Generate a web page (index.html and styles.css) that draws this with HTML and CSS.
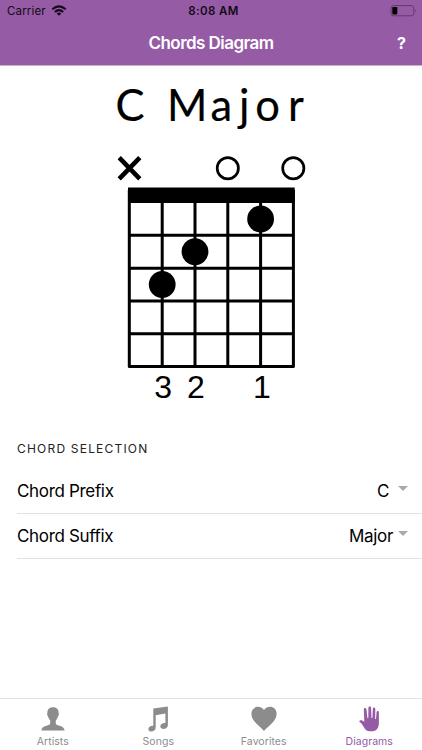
FILE: index.html
```html
<!DOCTYPE html>
<html lang="en">

<head>
  <meta charset="UTF-8">
  <meta name="viewport" content="width=device-width, initial-scale=1.0">
  <title>Chords Diagram</title>
  <link rel="stylesheet" href="styles.css">
</head>

<body>
  <div class="app">
    <header class="header">
      <div class="status">
        <div class="carrier">
          <span>Carrier</span>
          <svg width="16" height="12" viewBox="0 0 16 12" fill="none" stroke="#120a18" stroke-width="2">
            <path d="M1.3 4.3Q8 -1.5 14.7 4.3M3.8 7Q8 3.2 12.2 7" />
            <path d="M5.7 8.4Q8 6.4 10.3 8.4L8 10.8Z" fill="#120a18" stroke="none" />
          </svg>
        </div>
        <span class="time">8:08 AM</span>
        <svg class="battery" width="27" height="12" viewBox="0 0 27 12">
          <rect x="1" y=".6" width="22.8" height="10.2" rx="2.4" fill="none" stroke="#623c6c" />
          <rect x="2.3" y="2" width="5" height="7.4" rx=".8" />
          <path d="M25 4Q26.6 5.7 25 7.4Z" fill="#623c6c" />
        </svg>
      </div>
      <div class="toolbar">
        <h1>Chords Diagram</h1>
        <button class="help">?</button>
      </div>
    </header>

    <main class="content">
      <svg class="chord" width="212" height="345" viewBox="105 66 212 345">
        <text class="chord-name" x="115.5 145 167 210.5 239 255.3 288" y="120.5">C Major</text>
        <g fill="none" stroke="#000">
          <path d="M119.2 157.7L139.8 178.8M139.8 157.7L119.2 178.8" stroke-width="4.6" />
          <circle cx="227.8" cy="168.2" r="10.6" stroke-width="2.7" />
          <circle cx="293.3" cy="168.2" r="10.6" stroke-width="2.7" />
          <path d="M129.3 190V366.6H293.4V190M162.2 190V366.6M195 190V366.6M227.8 190V366.6M260.6 190V366.6" stroke-width="3" stroke-linejoin="round" />
          <path d="M129.3 235.3H293.4M129.3 268.2H293.4M129.3 301H293.4M129.3 333.8H293.4" stroke-width="3" />
        </g>
        <rect x="128" y="187.5" width="166.7" height="15.5" />
        <circle cx="260.6" cy="219" r="13.4" />
        <circle cx="195" cy="251.7" r="13.4" />
        <circle cx="162.2" cy="284.5" r="13.4" />
        <g class="fingers">
          <text x="163.2" y="398">3</text>
          <text x="196" y="398">2</text>
          <text x="261.8" y="398">1</text>
        </g>
      </svg>

      <h2>CHORD SELECTION</h2>
      <div class="row">
        <label>Chord Prefix</label>
        <span class="value prefix">C</span>
        <span class="arrow"></span>
      </div>
      <div class="row">
        <label>Chord Suffix</label>
        <span class="value">Major</span>
        <span class="arrow"></span>
      </div>
    </main>

    <nav class="tabs">
      <a class="tab">
        <svg width="30" height="28" viewBox="0 0 30 28">
          <path d="M15 2.2C18.8 2.2 20.8 4.5 20.6 8C21.2 8.6 20.8 10.8 19.9 11.4C19.5 13.3 18.6 14.4 17.8 15.3V18.7C18.3 20.8 26.2 20.1 26.6 25.6H3.4C3.8 20.1 11.7 20.8 12.2 18.7V15.3C11.4 14.4 10.5 13.3 10.1 11.4C9.2 10.8 8.8 8.6 9.4 8C9.2 4.5 11.2 2.2 15 2.2Z" />
        </svg>
        <span>Artists</span>
      </a>
      <a class="tab">
        <svg width="30" height="28" viewBox="0 0 30 28">
          <path d="M10.3 3.6L24.9 1.5V20.3C24.9 24.5 17.6 25.4 17.3 21.6C17.2 18.8 20.3 17.5 22.4 18V8.6L12.7 10.2V22.6C12.7 27.1 5.6 28 5.4 24.3C5.3 21.6 8.3 20.2 10.3 20.8Z" />
        </svg>
        <span>Songs</span>
      </a>
      <a class="tab">
        <svg width="30" height="28" viewBox="0 0 30 28">
          <path d="M15 5.1C19-.6 27.8 1.5 27.6 9.2C27.4 16.2 19.5 20.7 15 26C10.5 20.7 2.6 16.2 2.4 9.2C2.2 1.5 11-.6 15 5.1Z" />
        </svg>
        <span>Favorites</span>
      </a>
      <a class="tab active">
        <svg width="30" height="28" viewBox="0 0 30 28">
          <path d="M9.8 4.5C9.8 2.5 12.3 2.5 12.5 4.5L13.4 13H14.3L14.4 2.9C14.4 1 17 1 17.1 2.9L17.5 13H18.4L18.8 4C18.9 2 21.3 2.2 21.3 4.1L21.2 14H22L22.6 7.3C22.8 5.4 24.9 5.7 24.9 7.5V17.5C24.9 22.5 22.8 26.2 18.5 26.2H16C12.8 26.2 11.5 24.8 10.2 22.8C8.9 20.8 7.9 18.4 5.2 16.5C5.7 14.5 8.2 14.8 10.3 16.8Z" />
        </svg>
        <span>Diagrams</span>
      </a>
    </nav>
  </div>
</body>

</html>
```
FILE: styles.css
```css
:root {
  --primary-color: #965ba5;
  --border-color: #e2e2e2;
  --muted-color: #8c8c8c;
}

body {
  margin: 0;
  background-color: white;
  font-family: Inter, "Liberation Sans", sans-serif;
  color: black;
}

.app {
  display: flex;
  flex-direction: column;
  height: 100vh;
}

.header {
  box-sizing: border-box;
  height: 66px;
  background-color: var(--primary-color);
  border-bottom: 1px solid #c9b0cf;
}

.status {
  display: grid;
  grid-template-columns: 1fr auto 1fr;
  align-items: center;
  height: 22px;
  padding: 0 5px 0 7px;
  font-size: 11.5px;
  color: #120a18;
}

.carrier {
  display: flex;
  align-items: center;
  gap: 5px;
  letter-spacing: 0.15px;
}

.time {
  padding-left: 3px;
  font-weight: 600;
  letter-spacing: 0.4px;
}

.battery {
  justify-self: end;
}

.toolbar {
  display: grid;
  grid-template-columns: 1fr auto 1fr;
  align-items: center;
  height: 42px;
}

.toolbar h1 {
  grid-column: 2;
  margin: 0;
  font-size: 17px;
  font-weight: 600;
  letter-spacing: -0.55px;
  color: white;
}

.help {
  justify-self: end;
  margin-right: 16px;
  padding: 0;
  border: none;
  background: none;
  font: 700 16px Inter, sans-serif;
  color: white;
}

.content {
  flex: 1;
}

.chord {
  display: block;
  margin: 0 auto;
}

.chord-name {
  font-family: Lato, sans-serif;
  font-size: 43.5px;
  stroke: black;
  stroke-width: 0.2px;
}

.fingers {
  font-family: "Liberation Sans", Arial, sans-serif;
  font-size: 32px;
  text-anchor: middle;
}

.content h2 {
  margin: 0;
  padding: 29px 17px 0;
  font-size: 12px;
  font-weight: 400;
  line-height: 18px;
  letter-spacing: 1.2px;
  color: #222;
}

.row {
  display: flex;
  align-items: center;
  box-sizing: border-box;
  height: 45px;
  margin-left: 17px;
  padding-right: 14px;
  border-bottom: 1px solid var(--border-color);
  font-size: 17px;
  letter-spacing: -0.33px;
}

h2 + .row {
  margin-top: 11px;
}

.row label {
  flex: 1;
}

.prefix {
  margin-right: 4px;
}

.arrow {
  margin: -6px 0 0 5px;
  border: 5px solid transparent;
  border-top-color: #aaa;
  border-bottom: none;
}

.tabs {
  display: grid;
  grid-template-columns: repeat(4, 1fr);
  box-sizing: border-box;
  height: 52px;
  border-top: 1px solid var(--border-color);
}

.tab {
  display: flex;
  flex-direction: column;
  align-items: center;
  gap: 2px;
  padding-top: 6px;
  font-size: 10.5px;
  line-height: 14px;
  letter-spacing: 0.05px;
  color: var(--muted-color);
}

.tab svg {
  fill: currentColor;
}

.tab.active {
  color: var(--primary-color);
}
```
